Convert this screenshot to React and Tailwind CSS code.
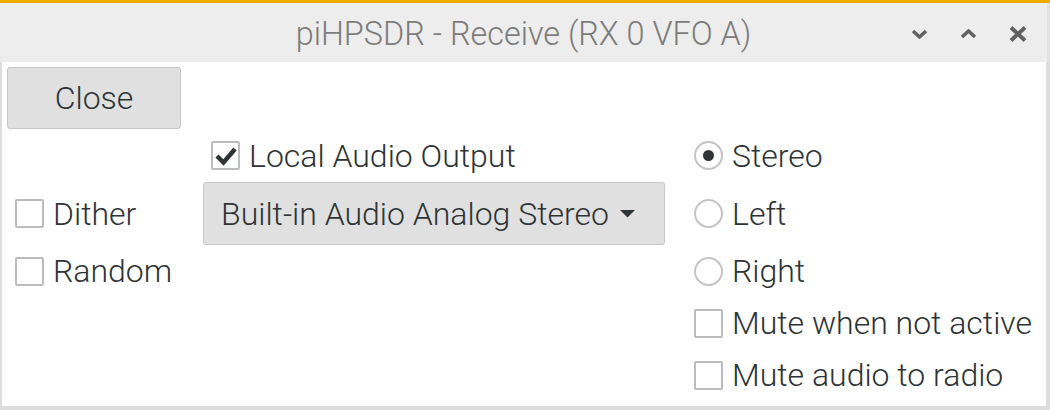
import React from "react";

function CheckBox({ checked, label }) {
  return (
    <div className="flex items-center gap-[9px]">
      <div className="w-[29px] h-[29px] border-2 border-[#bcbcbc] rounded-[2px] bg-white flex items-center justify-center">
        {checked && (
          <svg width="22" height="22" viewBox="0 0 22 22">
            <path d="M2 11 L8.5 17.5 L20 4" fill="none" stroke="#2e3436" strokeWidth="4.5" strokeLinejoin="miter" />
          </svg>
        )}
      </div>
      <span>{label}</span>
    </div>
  );
}

function Radio({ checked, label }) {
  return (
    <div className="flex items-center gap-[9px]">
      <div className="w-[29px] h-[29px] border-2 border-[#c4c4c4] rounded-full bg-white flex items-center justify-center">
        {checked && <div className="w-[11px] h-[11px] rounded-full bg-[#2e3436]" />}
      </div>
      <span>{label}</span>
    </div>
  );
}

export default function App() {
  return (
    <div
      className="w-[1050px] h-[410px] flex flex-col bg-white overflow-hidden font-light"
      style={{ fontFamily: "Roboto, 'Liberation Sans', sans-serif" }}
    >
      <div className="h-[3px] bg-[#f2aa00]" />

      {/* title bar */}
      <div className="relative h-[59px] bg-[#ededed] flex items-center justify-center pt-[4px] border-r-[3px] border-[#e2e2e2]">
        <span className="text-[32.4px] text-[#7c7c7c]">piHPSDR - Receive (RX 0 VFO A)</span>
        <div className="absolute right-[20px] top-0 h-full flex items-center gap-[32px] pt-[2px]">
          <svg width="17" height="10" viewBox="0 0 17 10">
            <path d="M2 2 L8.5 8 L15 2" fill="none" stroke="#616161" strokeWidth="3.5" />
          </svg>
          <svg width="17" height="10" viewBox="0 0 17 10">
            <path d="M2 8 L8.5 2 L15 8" fill="none" stroke="#616161" strokeWidth="3.5" />
          </svg>
          <svg width="18" height="16" viewBox="0 0 18 16">
            <path d="M2 1.5 L16 14.5 M16 1.5 L2 14.5" fill="none" stroke="#616161" strokeWidth="4" />
          </svg>
        </div>
      </div>

      {/* body */}
      <div className="flex-1 border-l-2 border-r-[4px] border-b-[4px] border-[#dcdcdc] pl-[5px] pt-[5px] text-[32px] text-[#2e3436]">
        <div className="grid grid-cols-[174px_462px_1fr] gap-x-[22px] grid-rows-[62px_53px_63px_52px_52px_52px] items-center">
          <button className="col-start-1 row-start-1 h-[62px] bg-[#e0e0e0] border border-[#c6c6c6] rounded-[3px] text-[#2e3436] text-[32px] font-light">
            Close
          </button>

          <div className="col-start-2 row-start-2 pl-[8px]">
            <CheckBox checked label="Local Audio Output" />
          </div>
          <div className="col-start-3 row-start-2 pl-[7px]">
            <Radio checked label="Stereo" />
          </div>

          <div className="col-start-1 row-start-3 pl-[8px]">
            <CheckBox label="Dither" />
          </div>
          <div className="col-start-2 row-start-3 h-[63px] bg-[#e0e0e0] border border-[#c8c8c8] rounded-[3px] flex items-center pl-[17px] pr-[29px] justify-between">
            <span>Built-in Audio Analog Stereo</span>
            <svg width="15" height="8" viewBox="0 0 15 8">
              <path d="M0 0 L15 0 L7.5 7.5 Z" fill="#2e3436" />
            </svg>
          </div>
          <div className="col-start-3 row-start-3 pl-[7px]">
            <Radio label="Left" />
          </div>

          <div className="col-start-1 row-start-4 pl-[8px]">
            <CheckBox label="Random" />
          </div>
          <div className="col-start-3 row-start-4 pl-[7px]">
            <Radio label="Right" />
          </div>

          <div className="col-start-3 row-start-5 pl-[7px]">
            <CheckBox label="Mute when not active" />
          </div>
          <div className="col-start-3 row-start-6 pl-[7px]">
            <CheckBox label="Mute audio to radio" />
          </div>
        </div>
      </div>
    </div>
  );
}
